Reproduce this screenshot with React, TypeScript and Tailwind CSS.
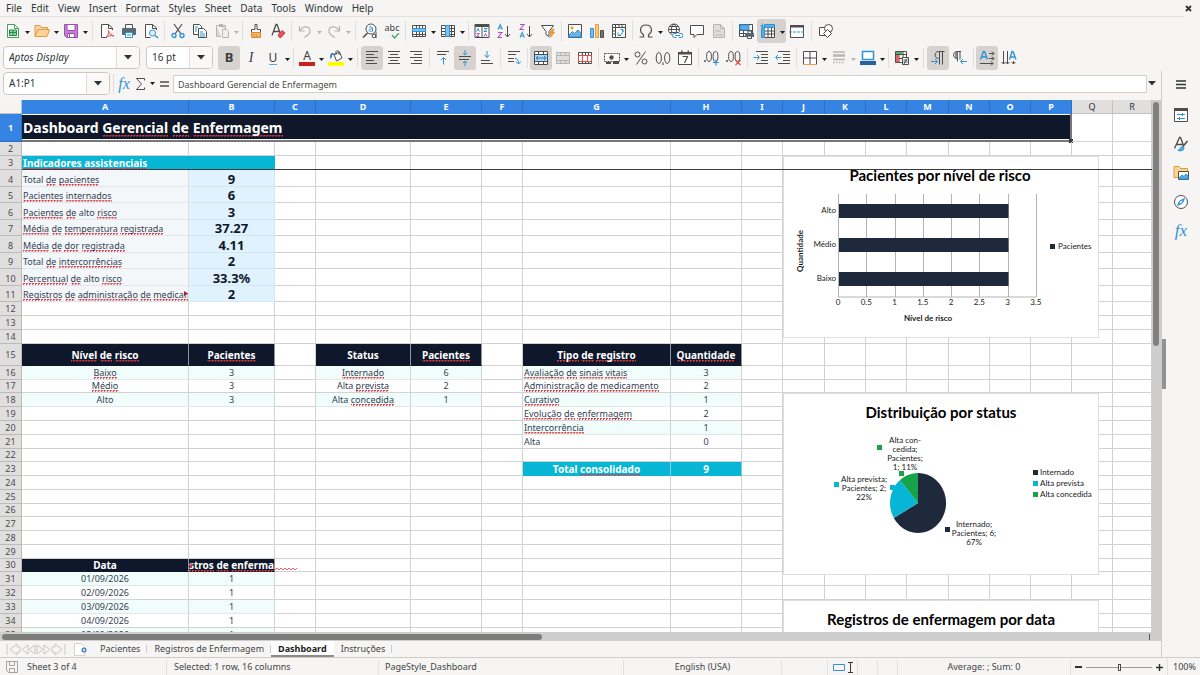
import { Fragment, useState } from 'react';
import type { ReactNode } from 'react';

const K = '#4d4d4d';
const B = '#2f93d6';
const G = '#b5b5b3';

const grid = 'M1.5 2.5h13v11h-13zM1.5 5.5h13M1.5 8.5h13M1.5 11.5h13M5.5 2.5v11M8.5 2.5v11M11.5 2.5v11';

const icons: Record<string, ReactNode> = {
  new: (
    <>
      <path d="M2.5 1.5h7l4 4v9h-11z" fill="#fff" stroke="#43a15c" />
      <path d="M9.5 1.5v4h4" stroke="#43a15c" />
      <path d="M4.5 7h7v5.5h-7zM4.5 9.5h7M8 7v5.5" stroke="#2b8a48" fill="#8fd3a2" />
    </>
  ),
  open: (
    <>
      <path d="M1 13.5V2.5h5l1.500 2h6v2.500" fill="#f6d3a0" stroke="#dd9a45" />
      <path d="M1 13.500 4 6.500h11.500l-2.500 7z" fill="#fbd49a" stroke="#e29a3d" />
    </>
  ),
  save: (
    <>
      <path d="M1.500 1.500h13v13h-11l-2-2z" fill="#c77fd4" stroke="#9b4fae" />
      <path d="M4 1.500h8v6H4z" fill="#fff" stroke="#9b4fae" />
      <path d="M4.500 10.500h7v4h-7z" fill="#fff" stroke="#9b4fae" />
      <path d="M6.500 11v3" stroke="#9b4fae" />
    </>
  ),
  pdf: (
    <>
      <path d="M13.500 7V5l-4-3.500h-7v13h5" fill="#fff" stroke={K} />
      <path d="M9.500 1.500v4h4" stroke={K} />
      <path d="M7 14.500c3-3 3.500-7 2.500-7s0 3.500 5.500 5.500c-3-1-6 0-8 1.500z" stroke="#de4b4b" />
    </>
  ),
  print: (
    <>
      <path d="M4.500 6V1.500h7V6" fill="#fff" stroke={K} />
      <rect x="1" y="5" width="14" height="7" rx="1" fill="#5a6a74" />
      <path d="M4.500 9.500h7v5h-7z" fill="#fff" stroke={B} />
      <path d="M6 12h4" stroke={B} />
    </>
  ),
  preview: (
    <>
      <path d="M13.500 7V5l-4-3.500h-7v13h5" fill="#fff" stroke={K} />
      <path d="M9.500 1.500v4h4" stroke={K} />
      <circle cx="9.500" cy="10" r="3" fill="#e2f1fb" stroke={B} />
      <path d="m12 12.500 3 2.500" stroke={B} strokeWidth="1.500" />
    </>
  ),
  cut: (
    <>
      <path d="m4 1 7 10M12 1 5 11" stroke={K} strokeWidth="1.200" />
      <circle cx="4" cy="12.500" r="2" stroke={B} strokeWidth="1.300" />
      <circle cx="12" cy="12.500" r="2" stroke={B} strokeWidth="1.300" />
    </>
  ),
  copy: (
    <>
      <path d="M1.500 1.500h6l2 2v8h-8z" fill="#fff" stroke={K} />
      <path d="M6.500 5.500h5l3 3v6h-8z" fill="#fff" stroke={K} />
      <path d="M8 9h3M8 11h5M8 13h5M3 4h3M3 6h2M3 8h2" stroke={B} />
    </>
  ),
  paste: (
    <>
      <path d="M2.500 2.500h9V6M2.500 2.500v11H7" fill="#d8d8d6" stroke={G} />
      <path d="M5 1h4v3H5z" fill={G} />
      <path d="M8.500 6.500h4l2 2v6h-6z" fill="#f0f0ef" stroke={G} />
    </>
  ),
  brush: (
    <>
      <path d="M7 1.500h2v5h3.500v3h-9v-3H7z" fill="#fff" stroke={K} />
      <path d="M3.500 9.500h9v5h-9z" fill="#f6b26b" stroke="#e08a2c" />
      <path d="M6 11v3M8.500 12v2.500" stroke="#e08a2c" />
    </>
  ),
  clear: (
    <>
      <path d="m2 12.500 4-11h1l4 11M3.500 8.500h6" stroke={K} strokeWidth="1.300" />
      <path d="m8 12 4-4.500 3 2.500-4 4.500H9.500z" fill="#e8505b" stroke="#d23b47" />
    </>
  ),
  undo: <path d="M2.500 3v5h5M3 7.500C6 2.500 13 2.500 13 8c0 3-3 5-6 6.500" stroke={G} strokeWidth="1.200" />,
  redo: <path d="M13.500 3v5h-5M13 7.500C10 2.500 3 2.500 3 8c0 3 3 5 6 6.500" stroke={G} strokeWidth="1.200" />,
  find: (
    <>
      <circle cx="9" cy="6" r="5" fill="#fff" stroke={K} />
      <path d="m5.500 10-4.500 4.500" stroke={K} strokeWidth="1.600" />
      <path d="M7 4.500c1-1 3-1 3.500.500v3.500M10.500 6C8.500 5.500 7 6.500 7 7.500c.500 1.300 2.500 1.300 3.500 0" stroke={B} />
      <circle cx="12" cy="13" r="1.800" fill="#fff" stroke={K} />
      <path d="M14 8.500V15" stroke={K} />
    </>
  ),
  row: (
    <>
      <path d={grid} fill="#fff" stroke={K} />
      <path d="M1.500 5.500h13v3h-13z" fill="#7fc0ee" stroke={B} />
    </>
  ),
  column: (
    <>
      <path d={grid} fill="#fff" stroke={K} />
      <path d="M5.500 2.500h4v11h-4z" fill="#7fc0ee" stroke={B} />
    </>
  ),
  sort: (
    <>
      <path d="M1 1.500h14v13H1z" fill="#fff" stroke={K} />
      <path d="M1 2h14v2H1z" fill={K} />
      <path d="M8 4v10.500" stroke={K} />
      <path d="m2.500 8.500 1.500-3 1.500 3M10 5.500h3l-3 3h3" stroke={B} />
      <path d="M2.500 10.500h3l-3 3h3M10 13.500l1.500-3 1.500 3" stroke="#b04fc4" />
    </>
  ),
  asc: (
    <>
      <path d="m2 6.500 2.200-5 2.200 5M3 5h2.500" stroke={B} strokeWidth="1.100" />
      <path d="M2 9.500h4l-4 5h4" stroke="#b04fc4" strokeWidth="1.100" />
      <path d="M11.500 3v11M9 11l2.500 3 2.500-3" stroke={K} />
    </>
  ),
  desc: (
    <>
      <path d="M2 1.500h4l-4 5h4" stroke="#b04fc4" strokeWidth="1.100" />
      <path d="m2 14.500 2.200-5 2.200 5M3 13h2.500" stroke={B} strokeWidth="1.100" />
      <path d="M11.500 3v11M9 11l2.500 3 2.500-3" stroke={K} />
    </>
  ),
  filter: (
    <>
      <path d="M1.500 2.500h12l-4.500 6v5l-3-2V8.500z" fill="#fff" stroke={K} />
      <path d="m12.500 6-3 4.500h2L10 14.500l4.500-5h-2l1.500-3z" fill="#f6a440" stroke="#e8912c" />
    </>
  ),
  image: (
    <>
      <path d="M1.500 1.500h13v13h-13z" fill="#fff" stroke={K} />
      <circle cx="5" cy="5" r="1.700" fill="#f5a840" />
      <path d="m2 12 3.500-3.500 2 2L11 7l3 3.500V14H2z" fill="#6db3e3" stroke={B} />
    </>
  ),
  chart: (
    <>
      <path d="M1.500 5.500h3v9h-3z" fill="#7dbdec" stroke={B} />
      <path d="M6.500 1.500h3v13h-3z" fill="#f9c888" stroke="#e59b3c" />
      <path d="M11.500 7.500h3v7h-3z" fill="#777" stroke={K} />
    </>
  ),
  pivot: (
    <>
      <path d="M1.500 1.500h13v13h-13z" fill="#fff" stroke={K} />
      <path d="M1.500 4.500h13M4.500 1.500v13M8 2v2M11 2v2M2 8h2M2 11h2" stroke={K} />
      <path d="M7 9.500v3h3M12 9V6.500H9.500M7 12.500c3 0 5-2 5-5.500" stroke={B} />
    </>
  ),
  omega: <path d="M1.500 14h4v-2.200C.700 8.500 2 2 8 2s7.300 6.500 2.500 9.800V14h4" stroke={K} strokeWidth="1.200" />,
  hyperlink: (
    <>
      <circle cx="7" cy="6.500" r="5.500" fill="#fff" stroke={K} />
      <path d="M1.500 6.500h11M7 1c-3.500 3-3.500 8 0 11M7 1c3.500 3 3.500 8 0 11M2.500 3.500h9M2.500 9.500h9" stroke={K} />
      <path d="M5 10h11v5H5z" fill="#f5f4f2" />
      <path d="M9.500 10.500h-2a2 2 0 0 0 0 4h2M12 10.500h2a2 2 0 0 1 0 4h-2M8.500 12.500h4.500" stroke={B} />
    </>
  ),
  comment: <path d="M1.500 2.500h13v9H8l-3 3v-3H1.500z" fill="#fff" stroke={K} />,
  page: (
    <>
      <path d="M2.500 1.500h7l4 4v9h-11z" fill="#dededc" stroke={G} />
      <path d="M9.500 1.500v4h4M4.500 12h7M4.500 8h5" stroke={G} />
    </>
  ),
  printArea: (
    <>
      <path d="M1.500 1.500h13v12h-13zM1.500 7.500h13M1.500 10.500h13M5.500 1.500v12M10 1.500v12" fill="#fff" stroke={K} />
      <path d="M2 2h9v5H2z" fill="#5aaae4" stroke={B} />
      <path d="M7 10h9v4H7z" fill="#5a6a74" />
      <path d="M9.500 8h4v2M9.500 13h4v2.500h-4z" fill="#fff" stroke={K} />
    </>
  ),
  freeze: (
    <>
      <path d="M4.500 4.500h10v10h-10zM4.500 8h10M4.500 11h10M8 4.500v10M11.500 4.500v10" fill="#fff" stroke={K} />
      <path d="M4.500 1.500h10v3h-10zM1.500 5h3v9.500h-3z" fill="#5aaae4" stroke={B} />
      <path d="M0 3h5M2.500.500v5" stroke={B} />
    </>
  ),
  split: (
    <>
      <path d="M1.500 2.500h13v12h-13z" fill="#fff" stroke={K} />
      <path d="M1 2h14v2.500H1z" fill={K} />
      <path d="M0 9h16" stroke={B} strokeDasharray="3 1" />
    </>
  ),
  shapes: (
    <>
      <path d="M1.500 4.500h7v8h-7z" fill="#fff" stroke={K} />
      <circle cx="10.500" cy="5.500" r="4" fill="#fff" stroke={K} />
      <path d="m9.500 6.500 4 4-4 4-4-4z" fill="#fff" stroke={K} />
    </>
  ),
  left: <path d="M2 1.500h12M2 4.500h8M2 7.500h12M2 10.500h8M2 13.500h11" stroke={K} />,
  center: <path d="M2 1.500h12M4 4.500h8M2 7.500h12M4 10.500h8M2 13.500h12" stroke={K} />,
  right: <path d="M2 1.500h12M6 4.500h8M2 7.500h12M6 10.500h8M3 13.500h11" stroke={K} />,
  top: (
    <>
      <path d="M2 1.500h12M2 4.500h9" stroke={K} />
      <path d="M8.500 14.500v-7M6 10l2.500-2.500L11 10" stroke={B} />
    </>
  ),
  middle: (
    <>
      <path d="M2 6.500h12M2 9.500h10" stroke={K} />
      <path d="M8 0v4.500M6 3l2 2 2-2M8 16v-4.500M6 13l2-2 2 2" stroke={B} />
    </>
  ),
  bottom: (
    <>
      <path d="M2 10.500h9M2 13.500h12" stroke={K} />
      <path d="M8 1v6.500M5.500 5 8 7.500 10.500 5" stroke={B} />
    </>
  ),
  wrap: (
    <>
      <path d="M2 1.500h12M2 4.500h8M2 8.500h6M2 11.500h6" stroke={K} />
      <path d="M9 8.500c3 0 3.500 2 3.500 5M10 11.500l2.500 2.500 2.500-2.500" stroke={B} />
    </>
  ),
  merge: (
    <>
      <path d="M1.500 1.500h13v13h-13zM1.500 4.500h13M1.500 11.500h13M5.500 1.500v3M10.500 1.500v3M5.500 11.500v3M10.500 11.500v3" fill="#fff" stroke={K} />
      <path d="M2 5h12v6H2z" fill="#a9d6f5" />
      <path d="M3 8h10M5 6 3 8l2 2M11 6l2 2-2 2" stroke="#2180c4" />
    </>
  ),
  mergeOff: (
    <path d="M1.500 2.500h13v11h-13zM1.500 5.500h13M1.500 10.500h13M5.500 2.500v3M10.500 2.500v3M5.500 10.500v3M10.500 10.500v3" fill="#dededc" stroke={G} />
  ),
  unmerge: (
    <>
      <path d={grid} fill="#fff" stroke={K} />
      <path d="M1.500 5.500h13v6h-13zM5.500 5.500v6M10.500 5.500v6" fill="#fff" stroke="#de4b4b" />
    </>
  ),
  currency: (
    <>
      <path d="M.500 3.500h15v8H.500z" fill="#fff" stroke={K} strokeDasharray="2 1" />
      <circle cx="7.500" cy="7.500" r="2.200" fill={K} />
      <path d="M9 11h6v3H9zM2 12h5v2H2z" fill={K} />
    </>
  ),
  percent: (
    <>
      <circle cx="4.500" cy="4.500" r="2.500" stroke={K} />
      <circle cx="11.500" cy="11.500" r="2.500" stroke={K} />
      <path d="m12.500 1.500-9 13" stroke={K} />
    </>
  ),
  number: (
    <>
      <ellipse cx="3.800" cy="8" rx="2.600" ry="5.500" stroke={K} />
      <ellipse cx="12.200" cy="8" rx="2.600" ry="5.500" stroke={K} />
      <path d="M8 12.500V15" stroke={K} strokeWidth="1.200" />
    </>
  ),
  date: (
    <>
      <path d="M1.500 2.500h13v12h-13z" fill="#fff" stroke={K} />
      <path d="M1 2h14v2.500H1zM4 .500h1.500V3H4zM10.500.500H12V3h-1.500z" fill={K} />
      <path d="M5.500 6.500h5l-3 6.500" stroke={K} strokeWidth="1.200" />
    </>
  ),
  decAdd: (
    <>
      <ellipse cx="5" cy="6.500" rx="2.400" ry="5" stroke={K} />
      <ellipse cx="11.500" cy="6.500" rx="2.400" ry="5" stroke={K} />
      <path d="M1 10v2" stroke={K} strokeWidth="1.500" />
      <path d="M9 12.500h6M12 9.500v6" stroke={B} strokeWidth="1.200" />
    </>
  ),
  decDel: (
    <>
      <ellipse cx="5" cy="6.500" rx="2.400" ry="5" stroke={K} />
      <ellipse cx="11.500" cy="6.500" rx="2.400" ry="5" stroke={K} />
      <path d="M1 10v2" stroke={K} strokeWidth="1.500" />
      <path d="m9.500 10 5 5M14.500 10l-5 5" stroke="#de4b4b" strokeWidth="1.200" />
    </>
  ),
  indent: (
    <>
      <path d="M3 1.500h12M8 4.500h7M8 7.500h7M8 10.500h7M3 13.500h12" stroke={K} />
      <path d="M.500 7.500H6M4 5l2.500 2.500L4 10" stroke={B} />
    </>
  ),
  outdent: (
    <>
      <path d="M3 1.500h12M8 4.500h7M8 7.500h7M8 10.500h7M3 13.500h12" stroke={K} />
      <path d="M1 7.500h5.500M3 5 .500 7.500 3 10" stroke={B} />
    </>
  ),
  border: (
    <>
      <path d="M1.500 14.500v-13h13v13M8 1.500v13M1.500 8h13" fill="#fff" stroke={K} />
      <path d="M1.500 14.500h13" stroke="#ee9b4b" />
    </>
  ),
  lineStyle: <path d="M2 2h12M2 5h12M2 6h12M2 9.500h12M2 12.500h1.500M5 12.500h1.500M8 12.500h1.500M11 12.500h1.500" stroke={G} strokeWidth="1.500" />,
  lineColor: (
    <>
      <path d="M2.500 1.500h11v8h-11z" fill="#fff" stroke={B} strokeWidth="1.500" />
      <path d="M0 11h16v4H0z" fill="#2a6099" />
    </>
  ),
  conditional: (
    <>
      <path d="M1.500 1.500h11v11h-11zM1.500 4.500h11M1.500 8.500h11M5 1.500v11M9 1.500v11" fill="#fff" stroke={K} />
      <path d="M2 2h6.500v2H2z" fill="#4fb070" />
      <path d="M2 5h3v7H2z" fill="#e8606a" />
      <path d="M8.500 7.500h6v7h-6z" fill="#fff" stroke={K} />
      <path d="M9.500 10h4M9.500 12h4M13 8.500 10 14" stroke={K} />
    </>
  ),
  ltr: (
    <>
      <path d="M8.500 8.500c-4.500 0-4.500-7 0-7h6M9.500 1.500v13M12.500 1.500v13" stroke={K} />
      <path d="M1 11.500h6M5 9l2.500 2.500L5 14" stroke={B} />
    </>
  ),
  rtl: (
    <>
      <path d="M5 8.500C.500 8.500.500 1.500 5 1.500h4M5.500 1.500v10M8 1.500v8" stroke={K} />
      <path d="M3 2h2.500v6H3z" fill="#8a8a8a" />
      <path d="M15 11.500H9M11 9l-2.500 2.500L11 14" stroke={B} />
    </>
  ),
  textRight: (
    <>
      <path d="m1.500 9.500 3-8h1l3 8M2.500 7h5" stroke={B} strokeWidth="1.400" />
      <path d="M10 3.500h5M13 1.500l2 2-2 2M10 8.500h5M13 6.500l2 2-2 2M1 13.500h13M12 11.500l2 2-2 2" stroke={K} />
    </>
  ),
  textDown: (
    <>
      <path d="m8.500 9.500 2.500-8h1l3 8M9.500 7h4" stroke={B} strokeWidth="1.400" />
      <path d="M2.500 1v13M.500 12l2 2 2-2M6.500 1v13M4.500 12l2 2 2-2M12.500 11v3M10.500 12l2 2 2-2" stroke={K} />
    </>
  ),
  properties: (
    <>
      <path d="M1.500 1.500h13v13h-13z" fill="#fff" stroke={K} />
      <path d="M1 1h14v3H1z" fill={K} />
      <path d="M4 7.500h8M4 11.500h8M9.500 6v3M6.500 10v3" stroke={B} />
    </>
  ),
  styles: (
    <>
      <path d="m1.500 12.500 5-11h1l3 8M3.500 8.500h6" stroke={K} strokeWidth="1.300" />
      <path d="m14.500 5-5 6" stroke={K} strokeWidth="1.500" />
      <path d="M9.500 10.500c2 0 2 3.500-.5 4s-4 .5-4-.5c2 0 2.500-3.500 4.500-3.500z" fill="#5aaae4" stroke={B} />
    </>
  ),
  gallery: (
    <>
      <path d="M1 12.500v-11h5l1.500 2h7v9z" fill="#fbd49a" stroke="#e29a3d" />
      <path d="M5.500 6.500h10v8h-10z" fill="#fff" stroke={K} />
      <path d="m6 13 3-3 2 1.500 2-2.500 2 2v3H6z" fill="#5aaae4" stroke={B} />
    </>
  ),
  navigator: (
    <>
      <circle cx="8" cy="8" r="6.500" fill="#fff" stroke={K} />
      <path d="M11.500 4.500 9.500 9l-5 2.500 2-4.500z" fill="#5aaae4" stroke={B} />
      <circle cx="8" cy="8" r="1" fill="#fff" />
    </>
  ),
};

function Icon({ name }: { name: string }) {
  return (
    <svg width="16" height="16" viewBox="0 0 16 16" fill="none" className="shrink-0">
      {icons[name]}
    </svg>
  );
}

function Caret({ dim }: { dim?: boolean }) {
  return (
    <svg width="5" height="3" viewBox="0 0 5 3" className="shrink-0">
      <path d="M0 0h5L2.500 3z" fill={dim ? '#b5b5b3' : '#1d1d1d'} />
    </svg>
  );
}

function BigCaret() {
  return (
    <svg width="8" height="5" viewBox="0 0 8 5" className="shrink-0">
      <path d="M0 0h8L4 4.500z" fill="#2e3436" />
    </svg>
  );
}

type ToolProps = { label: string; icon?: string; menu?: boolean; on?: boolean; dim?: boolean; children?: ReactNode };

function Tool({ label, icon, menu, on, dim, children }: ToolProps) {
  return (
    <div className={`flex shrink-0 items-center rounded-[3px] ${on ? 'bg-[#d5d2cf]' : ''}`}>
      <button aria-label={label} className="flex h-6 w-[22px] items-center justify-center">
        {icon ? <Icon name={icon} /> : children}
      </button>
      {menu && (
        <button aria-label={`${label} options`} className="flex h-6 w-[7px] items-center justify-center pt-1">
          <Caret dim={dim} />
        </button>
      )}
    </div>
  );
}

const Sep = ({ wide }: { wide?: boolean }) => (
  <div className={`flex h-5 shrink-0 justify-center ${wide ? 'w-[7px]' : 'w-[5px]'}`}>
    <div className="w-px bg-[#e1dfdd]" />
  </div>
);

const menus = ['File', 'Edit', 'View', 'Insert', 'Format', 'Styles', 'Sheet', 'Data', 'Tools', 'Window', 'Help'];

function MenuBar() {
  return (
    <div className="flex h-4 items-center pl-[6px] pr-[7px] text-[10px] text-[#2e3436]">
      <nav className="flex gap-[9px]">
        {menus.map((m) => (
          <button key={m} className="leading-4">{m}</button>
        ))}
      </nav>
      <button aria-label="Close document" className="ml-auto p-px">
        <svg width="7" height="7" viewBox="0 0 7 7">
          <path d="m1 1 5 5M6 1 1 6" stroke="#2e3436" strokeWidth="1.800" />
        </svg>
      </button>
    </div>
  );
}

function StandardBar() {
  return (
    <div className="mr-4 flex h-7 items-center border-t border-[#e4e2e0] pl-[2px]">
      <Tool label="New" icon="new" menu />
      <Tool label="Open" icon="open" menu />
      <Tool label="Save" icon="save" menu />
      <Sep wide />
      <Tool label="Export as PDF" icon="pdf" />
      <Tool label="Print" icon="print" />
      <Tool label="Print preview" icon="preview" />
      <Sep />
      <Tool label="Cut" icon="cut" />
      <Tool label="Copy" icon="copy" />
      <Tool label="Paste" icon="paste" menu dim />
      <Sep />
      <Tool label="Clone formatting" icon="brush" />
      <Tool label="Clear formatting" icon="clear" />
      <Sep />
      <Tool label="Undo" icon="undo" menu dim />
      <Tool label="Redo" icon="redo" menu dim />
      <Sep wide />
      <Tool label="Find and replace" icon="find" />
      <Tool label="Spelling">
        <span className="relative flex h-4 text-[9px] leading-[10px] text-[#3c3c3c]">
          abc
          <svg width="9" height="6" viewBox="0 0 9 6" className="absolute -right-px bottom-0" fill="none">
            <path d="m1 2 2.500 3L8 0" stroke="#3aa76d" strokeWidth="1.300" />
          </svg>
        </span>
      </Tool>
      <Sep />
      <Tool label="Row" icon="row" menu />
      <Tool label="Column" icon="column" menu />
      <Sep />
      <Tool label="Sort" icon="sort" />
      <Tool label="Sort ascending" icon="asc" />
      <Tool label="Sort descending" icon="desc" />
      <Tool label="AutoFilter" icon="filter" />
      <Sep />
      <Tool label="Insert image" icon="image" />
      <Tool label="Insert chart" icon="chart" />
      <Tool label="Pivot table" icon="pivot" />
      <Sep />
      <Tool label="Special character" icon="omega" menu />
      <Tool label="Hyperlink" icon="hyperlink" />
      <Tool label="Comment" icon="comment" />
      <Tool label="Headers and footers" icon="page" />
      <Sep />
      <Tool label="Print area" icon="printArea" />
      <Tool label="Freeze panes" icon="freeze" menu on />
      <Tool label="Split window" icon="split" />
      <Sep wide />
      <Tool label="Draw functions" icon="shapes" />
    </div>
  );
}

function Combo({ label, value, inputClass, arrowClass }: { label: string; value: string; inputClass: string; arrowClass: string }) {
  return (
    <div className="flex h-[23px] shrink-0 rounded-[4px] border border-[#cdc7c2] bg-white text-[10px] text-[#2e3436]">
      <input aria-label={label} defaultValue={value} className={`bg-transparent pl-[5px] outline-none ${inputClass}`} />
      <button aria-label={`${label} list`} className={`flex items-center justify-center rounded-r-[3px] border-l border-[#dedbd8] bg-[#faf9f8] ${arrowClass}`}>
        <BigCaret />
      </button>
    </div>
  );
}

function FormatBar() {
  return (
    <div className="flex h-[27px] items-center pl-[3px]">
      <Combo label="Font name" value="Aptos Display" inputClass="w-[112px] italic" arrowClass="w-[23px]" />
      <div className="w-[6px] shrink-0" />
      <Combo label="Font size" value="16 pt" inputClass="w-[42px]" arrowClass="w-[23px]" />
      <div className="w-[5px] shrink-0" />
      <Tool label="Bold" on>
        <span className="text-[13px] font-bold text-[#3c3c3c]">B</span>
      </Tool>
      <Tool label="Italic">
        <span className="font-['Liberation_Serif',serif] text-sm italic text-[#3c3c3c]">I</span>
      </Tool>
      <Tool label="Underline" menu>
        <span className="border-b border-[#5aaae4] text-[12px] leading-[13px] text-[#3c3c3c]">U</span>
      </Tool>
      <Sep />
      <Tool label="Font colour" menu>
        <span className="flex w-4 justify-center border-b-4 border-[#c9211e] text-[12px] leading-3 text-[#3c3c3c]">A</span>
      </Tool>
      <Tool label="Highlighting" menu>
        <svg width="16" height="16" viewBox="0 0 16 16" fill="none">
          <path d="M6 4.500 11.500 2l2.500 6-5.500 3z" fill="#fff" stroke="#4d4d4d" />
          <path d="M8 5V1.500c0-1 3-1 3 0V5" stroke="#4d4d4d" />
          <path d="M6.500 3.500C3 2 2 3.500 2 8.500c2 0 2-2 2-3.500h2z" fill="#2a7fc9" />
          <path d="M0 12h16v4H0z" fill="#ffff00" />
        </svg>
      </Tool>
      <Sep wide />
      <Tool label="Align left" icon="left" on />
      <Tool label="Center horizontally" icon="center" />
      <Tool label="Align right" icon="right" />
      <Sep />
      <Tool label="Align top" icon="top" />
      <Tool label="Center vertically" icon="middle" on />
      <Tool label="Align bottom" icon="bottom" />
      <Sep />
      <Tool label="Wrap text" icon="wrap" />
      <Sep />
      <Tool label="Merge and center" icon="merge" on />
      <Tool label="Merge cells" icon="mergeOff" />
      <Tool label="Unmerge cells" icon="unmerge" />
      <Sep />
      <Tool label="Currency" icon="currency" menu />
      <Tool label="Percent" icon="percent" />
      <Tool label="Number" icon="number" />
      <Tool label="Date" icon="date" />
      <Sep />
      <Tool label="Add decimal place" icon="decAdd" />
      <Tool label="Delete decimal place" icon="decDel" />
      <Sep />
      <Tool label="Increase indent" icon="indent" />
      <Tool label="Decrease indent" icon="outdent" />
      <Sep />
      <Tool label="Borders" icon="border" menu />
      <Tool label="Border style" icon="lineStyle" menu dim />
      <Tool label="Border colour" icon="lineColor" menu />
      <Sep />
      <Tool label="Conditional formatting" icon="conditional" menu />
      <Sep wide />
      <Tool label="Left to right" icon="ltr" on />
      <Tool label="Right to left" icon="rtl" />
      <Sep />
      <Tool label="Text direction right" icon="textRight" on />
      <Tool label="Text direction down" icon="textDown" />
    </div>
  );
}

function FormulaBar() {
  return (
    <div className="flex h-[29px] items-start pl-[3px] pt-px">
      <Combo label="Name box" value="A1:P1" inputClass="w-[82px]" arrowClass="w-[23px]" />
      <div className="flex h-[23px] items-center pl-px text-[#4d4d4d]">
        <Sep />
        <button aria-label="Function wizard" className="w-4 font-['Liberation_Serif',serif] text-[16px] italic leading-5 text-[#2f93d6]">fx</button>
        <button aria-label="Select function" className="flex w-4 justify-center">
          <svg width="9" height="12" viewBox="0 0 9 12" fill="none">
            <path d="M8.500 2.500V.500h-8l5 5.500-5 5.500h8v-2" stroke="#4d4d4d" />
          </svg>
        </button>
        <button aria-label="Function list" className="flex w-2 items-center justify-center"><Caret /></button>
        <button aria-label="Formula" className="flex w-[17px] justify-center">
          <svg width="9" height="6" viewBox="0 0 9 6"><path d="M0 1h9M0 5h9" stroke="#4d4d4d" strokeWidth="1.500" /></svg>
        </button>
      </div>
      <input
        aria-label="Input line"
        defaultValue="Dashboard Gerencial de Enfermagem"
        className="mt-[3px] h-[18px] min-w-0 flex-1 border border-[#d5d0cc] bg-white pl-1 text-[9px] text-[#4a4a4a] outline-none"
      />
      <button aria-label="Expand formula bar" className="flex h-[23px] w-[14px] items-center pl-px"><BigCaret /></button>
    </div>
  );
}

const columns = 'ABCDEFGHIJKLMNOPQR'.split('');

const colWidths = [
  'w-[167px]', 'w-[86px]', 'w-[41px]', 'w-[95px]', 'w-[71px]', 'w-[41px]', 'w-[148px]', 'w-[71px]', 'w-[41px]',
  'w-[42px]', 'w-[41px]', 'w-[41px]', 'w-[42px]', 'w-[41px]', 'w-[41px]', 'w-[41px]', 'w-[41px]', '',
];

const rowHeights = [
  'h-[28px]', 'h-[14px]', 'h-[14px]', 'h-[17px]', 'h-[16px]', 'h-[17px]', 'h-[16px]', 'h-[17px]', 'h-[16px]',
  'h-[17px]', 'h-[16px]', 'h-[14px]', 'h-[14px]', 'h-[14px]', 'h-[22px]', 'h-[14px]', 'h-[13px]', 'h-[14px]',
  'h-[14px]', 'h-[14px]', 'h-[14px]', 'h-[13px]', 'h-[14px]', 'h-[14px]', 'h-[14px]', 'h-[13px]', 'h-[14px]',
  'h-[14px]', 'h-[14px]', 'h-[13px]', 'h-[14px]', 'h-[14px]', 'h-[14px]', 'h-[14px]', 'h-[14px]',
];

const kinds = {
  label: 'bg-[#f4f7fa] align-bottom text-[9px] text-[#334155] border-b-[#e2e6ea] border-r-[#d9dee3]',
  kpi: 'bg-[#e0f2fe] align-bottom text-center text-[13px] font-bold text-[#0f172a] border-[#d3e8f6]',
  head: 'bg-[#0f172a] text-center text-[10px] font-bold text-white border-b-[#0f172a] border-r-[#8f949e]',
  stripe: 'bg-[#f0fdfa] align-bottom text-center text-[9px] text-[#334155] border-b-[#dfe9e7] border-r-[#cfd6d5]',
  plain: 'bg-white align-bottom text-center text-[9px] text-[#334155] border-[#d2d2d2]',
  stripeLeft: 'bg-[#f0fdfa] align-bottom text-[9px] text-[#334155] border-b-[#dfe9e7] border-r-[#cfd6d5]',
  plainLeft: 'bg-white align-bottom text-[9px] text-[#334155] border-[#d2d2d2]',
  total: 'bg-[#06b6d4] align-bottom text-center text-[10px] font-bold text-white border-b-[#06b6d4] border-r-[#7fd0df]',
};

type Kind = keyof typeof kinds;

// words prefixed with ~ carry the spell checker's underline
const cells: Record<string, [string, Kind]> = {
  A4: ['Total ~de ~pacientes', 'label'], B4: ['9', 'kpi'],
  A5: ['~Pacientes ~internados', 'label'], B5: ['6', 'kpi'],
  A6: ['~Pacientes ~de alto ~risco', 'label'], B6: ['3', 'kpi'],
  A7: ['~Média ~de ~temperatura ~registrada', 'label'], B7: ['37.27', 'kpi'],
  A8: ['~Média ~de ~dor ~registrada', 'label'], B8: ['4.11', 'kpi'],
  A9: ['Total ~de ~intercorrências', 'label'], B9: ['2', 'kpi'],
  A10: ['~Percentual ~de alto ~risco', 'label'], B10: ['33.3%', 'kpi'],
  A11: ['~Registros ~de ~administração ~de ~medicamento', 'label'], B11: ['2', 'kpi'],
  A15: ['~Nível ~de ~risco', 'head'], B15: ['~Pacientes', 'head'],
  D15: ['Status', 'head'], E15: ['~Pacientes', 'head'],
  G15: ['~Tipo ~de ~registro', 'head'], H15: ['~Quantidade', 'head'],
  A16: ['~Baixo', 'stripe'], B16: ['3', 'stripe'],
  A17: ['~Médio', 'plain'], B17: ['3', 'plain'],
  A18: ['Alto', 'stripe'], B18: ['3', 'stripe'],
  D16: ['~Internado', 'stripe'], E16: ['6', 'stripe'],
  D17: ['Alta ~prevista', 'plain'], E17: ['2', 'plain'],
  D18: ['Alta ~concedida', 'stripe'], E18: ['1', 'stripe'],
  G16: ['~Avaliação ~de ~sinais ~vitais', 'stripeLeft'], H16: ['3', 'stripe'],
  G17: ['~Administração ~de ~medicamento', 'plainLeft'], H17: ['2', 'plain'],
  G18: ['~Curativo', 'stripeLeft'], H18: ['1', 'stripe'],
  G19: ['~Evolução ~de ~enfermagem', 'plainLeft'], H19: ['2', 'plain'],
  G20: ['~Intercorrência', 'stripeLeft'], H20: ['1', 'stripe'],
  G21: ['Alta', 'plainLeft'], H21: ['0', 'plain'],
  G23: ['Total ~consolidado', 'total'], H23: ['9', 'total'],
  A30: ['Data', 'head'], B30: ['~Registros ~de ~enfermagem', 'head'],
  A31: ['01/09/2026', 'stripe'], B31: ['1', 'stripe'],
  A32: ['02/09/2026', 'plain'], B32: ['1', 'plain'],
  A33: ['03/09/2026', 'stripe'], B33: ['1', 'stripe'],
  A34: ['04/09/2026', 'plain'], B34: ['1', 'plain'],
  A35: ['05/09/2026', 'stripe'], B35: ['1', 'stripe'],
};

const clipped = ['A11', 'B30'];

function Spelled({ text }: { text: string }) {
  return (
    <>
      {text.split(' ').map((word, i) => (
        <Fragment key={i}>
          {i > 0 && ' '}
          {word.startsWith('~') ? (
            <span className="bg-[linear-gradient(135deg,#dc3a40_50%,transparent_50%)] bg-[length:3px_2px] bg-bottom bg-repeat-x">
              {word.slice(1)}
            </span>
          ) : (
            word
          )}
        </Fragment>
      ))}
    </>
  );
}

function Cell({ id }: { id: string }) {
  const cell = cells[id];
  if (!cell) {
    return (
      <td className="relative border-b border-r border-[#d2d2d2] p-0">
        {id === 'C30' && (
          <svg width="22" height="4" viewBox="0 0 22 4" fill="none" className="absolute bottom-0 left-0">
            <path d="m0 3 2-2 2 2 2-2 2 2 2-2 2 2 2-2 2 2 2-2 2 2 2-2" stroke="#e0383e" strokeWidth="0.800" />
          </svg>
        )}
      </td>
    );
  }
  const [text, kind] = cell;
  return (
    <td className={`relative border-b border-r p-0 ${kinds[kind]}`}>
      <div
        className={`flex whitespace-nowrap ${clipped.includes(id) ? 'overflow-x-clip' : ''} ${kind === 'kpi' ? 'leading-[14px]' : 'leading-3'} ${kinds[kind].includes('text-center') ? 'justify-center' : 'pl-px'}`}
      >
        <span><Spelled text={text} /></span>
      </div>
      {id === 'A11' && (
        <svg width="4" height="5" viewBox="0 0 4 5" className="absolute right-0 top-[5px]">
          <path d="M0 0v5l4-2.500z" fill="#a32027" />
        </svg>
      )}
      {id === 'B30' && (
        <svg width="3" height="5" viewBox="0 0 3 5" className="absolute left-0 top-1">
          <path d="M3 0v5L0 2.500z" fill="#e0383e" />
        </svg>
      )}
    </td>
  );
}

function SheetTable() {
  return (
    <table className="w-full table-fixed border-separate border-spacing-0 text-[#2e3436]">
      <colgroup>
        <col className="w-[22px]" />
        {colWidths.map((w, i) => <col key={i} className={w} />)}
      </colgroup>
      <thead>
        <tr className="h-[14px] text-[9px] leading-3">
          <th className="border-b border-r border-[#c4c2c0] bg-[#f5f4f2] p-0" />
          {columns.map((c, i) => (
            <th
              key={c}
              scope="col"
              className={`border-r p-0 ${i < 16 ? 'border-[#2a6fc4] bg-[#3584e4] font-bold text-white' : 'border-b border-[#c4c2c0] bg-[#e1dfdd] font-normal'}`}
            >
              {c}
            </th>
          ))}
        </tr>
      </thead>
      <tbody>
        {rowHeights.map((h, i) => {
          const n = i + 1;
          return (
            <tr key={n} className={h}>
              <th
                scope="row"
                className={`border-b border-r p-0 text-[9px] leading-3 ${n === 1 ? 'border-[#2a6fc4] bg-[#3584e4] font-bold text-white' : 'border-[#bdbbb9] bg-[#e1dfdd] font-normal text-[#4a4a4a]'} ${n === 15 ? 'align-middle' : n > 1 ? 'align-bottom' : ''}`}
              >
                {n}
              </th>
              {n === 1 && (
                <>
                  <td colSpan={16} className="relative border-b-2 border-r-2 border-[#77777a] bg-[#0f172a] p-0 pt-[2px] text-[14px] font-bold leading-5 text-white shadow-[inset_0_1px_0_#fff,inset_0_-1px_0_#fff]">
                    <div className="pl-px"><Spelled text="Dashboard ~Gerencial ~de ~Enfermagem" /></div>
                    <span className="absolute -bottom-[3px] -right-[3px] size-1 bg-[#3a3a3c]" />
                  </td>
                  <Cell id="Q1" />
                  <Cell id="R1" />
                </>
              )}
              {n === 3 && (
                <td colSpan={2} className="border-b border-r border-[#06b6d4] bg-[#06b6d4] p-0 align-bottom text-[10px] font-bold leading-3 text-white">
                  <div className="pl-px"><Spelled text="~Indicadores ~assistenciais" /></div>
                </td>
              )}
              {n > 1 && columns.slice(n === 3 ? 2 : 0).map((c) => <Cell key={c} id={`${c}${n}`} />)}
            </tr>
          );
        })}
      </tbody>
    </table>
  );
}

const chartClass = "absolute left-[783px] bg-white outline outline-1 -outline-offset-1 outline-[#dedede] font-['Lato',sans-serif]";
const levels = [
  { name: 'Alto', value: 3 },
  { name: 'Médio', value: 3 },
  { name: 'Baixo', value: 3 },
];

function RiskChart() {
  return (
    <svg width="316" height="182" viewBox="0 0 316 182" className={`${chartClass} top-[56px]`} fontSize="8" fill="#1a1a1a">
      <text x="157" y="25" fontSize="15" fontWeight="700" textAnchor="middle" fill="#000">Pacientes por nível de risco</text>
      {[0, 0.5, 1, 1.5, 2, 2.5, 3, 3.5].map((v) => (
        <g key={v}>
          <path d={`M${Math.round(v * 56.5) + 55.5} 38v103`} stroke="#b3b3b3" />
          <text x={v * 56.5 + 55} y="149" textAnchor="middle">{v}</text>
        </g>
      ))}
      <path d="M55 141h198" stroke="#b3b3b3" />
      {levels.map((l, i) => (
        <g key={l.name}>
          <rect x="56" y={48 + i * 34} width={l.value * 56.5} height="14" fill="#1e293b" />
          <text x="53" y={57 + i * 34} textAnchor="end">{l.name}</text>
        </g>
      ))}
      <text x="145" y="165" fontWeight="700" textAnchor="middle">Nível de risco</text>
      <text transform="rotate(-90 20 95)" x="20" y="95" fontWeight="700" textAnchor="middle">Quantidade</text>
      <rect x="267" y="88" width="5" height="5" fill="#1e293b" />
      <text x="275" y="93">Pacientes</text>
    </svg>
  );
}

const legend = [
  { name: 'Internado', color: '#1e293b' },
  { name: 'Alta prevista', color: '#06b6d4' },
  { name: 'Alta concedida', color: '#16a34a' },
];

const pieLabels = [
  { x: 122, y: 50, lines: ['Alta con-', 'cedida;', 'Pacientes;', '1; 11%'] },
  { x: 81, y: 89, lines: ['Alta prevista;', 'Pacientes; 2;', '22%'] },
  { x: 191, y: 134, lines: ['Internado;', 'Pacientes; 6;', '67%'] },
];

function StatusChart() {
  return (
    <svg width="316" height="182" viewBox="0 0 316 182" className={`${chartClass} top-[293px]`} fontSize="8" fill="#1a1a1a">
      <text x="158" y="25" fontSize="15" fontWeight="700" textAnchor="middle" fill="#000">Distribuição por status</text>
      <path d="M135 110V80a28 30 0 1 1-24.200 45z" fill="#1e293b" />
      <path d="M135 110l-24.200 15A28 30 0 0 1 117 87z" fill="#06b6d4" />
      <path d="M135 110 117 87a28 30 0 0 1 18-7z" fill="#16a34a" />
      <path d="M94 52h5v5h-5zM116 78h5v5h-5z" fill="#16a34a" />
      <path d="M51 89h5v5h-5zM107 92h5v5h-5z" fill="#06b6d4" />
      <path d="M162 134h5v5h-5z" fill="#1e293b" />
      {pieLabels.map((l) => (
        <text key={l.x} textAnchor="middle">
          {l.lines.map((line, i) => (
            <tspan key={line} x={l.x} y={l.y + i * 9}>{line}</tspan>
          ))}
        </text>
      ))}
      {legend.map((l, i) => (
        <g key={l.name}>
          <rect x="250" y={77 + i * 11} width="5" height="5" fill={l.color} />
          <text x="257" y={82 + i * 11}>{l.name}</text>
        </g>
      ))}
    </svg>
  );
}

function DateChart() {
  return (
    <svg width="316" height="182" viewBox="0 0 316 182" className={`${chartClass} top-[500px]`}>
      <text x="158" y="25" fontSize="15" fontWeight="700" textAnchor="middle">Registros de enfermagem por data</text>
    </svg>
  );
}

const sheets = ['Pacientes', 'Registros de Enfermagem', 'Dashboard', 'Instruções'];

function SheetTabs() {
  const [active, setActive] = useState('Dashboard');
  return (
    <div className="flex h-4 items-stretch pl-[6px] text-[9px] text-[#3f4446]">
      <div className="flex items-center text-[#c9c7c5]">
        {['M1 1v11M11 1 4 6.500 11 12V9h3V4h-3z', 'M7 2 1 6.500 7 11zM14 2 8 6.500l6 4.500z', 'M1 2l6 4.500L1 11zM8 2l6 4.500L8 11z', 'M14 1v11M4 1l7 5.500L4 12V9H1V4h3z'].map((d, i) => (
          <button key={i} aria-label={['First sheet', 'Previous sheet', 'Next sheet', 'Last sheet'][i]}>
            <svg width="15" height="13" viewBox="0 0 15 13" fill="none" stroke="currentColor"><path d={d} /></svg>
          </button>
        ))}
      </div>
      <button aria-label="Add sheet" className="ml-2">
        <svg width="14" height="14" viewBox="0 0 14 14" fill="none">
          <path d="M.500 1.500h7l3 3v9H.500z" fill="#fff" stroke="#d6d4d2" />
          <circle cx="10" cy="8" r="2.500" fill="#2a6fc4" />
          <path d="M10 6.500v3M8.500 8h3" stroke="#fff" />
        </svg>
      </button>
      <div className="ml-[5px] flex">
        {sheets.map((s) => (
          <button
            key={s}
            onClick={() => setActive(s)}
            className={`relative border-b-2 px-[7px] pt-px leading-[13px] ${s === active ? 'border-[#8b8b89] bg-white font-bold text-[#1d1d1d]' : 'border-transparent after:absolute after:right-0 after:top-1 after:h-2 after:w-px after:bg-[#cfccc9]'}`}
          >
            {s}
          </button>
        ))}
      </div>
    </div>
  );
}

function Sidebar() {
  return (
    <aside className="relative flex w-[39px] shrink-0 flex-col items-center gap-[13px] border-l border-[#cfccc9] pt-[5px]">
      <button aria-label="Sidebar settings" className="mb-[2px] flex h-4 items-center">
        <svg width="10" height="9" viewBox="0 0 10 9"><path d="M0 1h10M0 4.500h10M0 8h10" stroke="#2e3436" strokeWidth="1.400" /></svg>
      </button>
      {['properties', 'styles', 'gallery', 'navigator'].map((n) => (
        <button key={n} aria-label={n}><Icon name={n} /></button>
      ))}
      <button aria-label="functions" className="font-['Liberation_Serif',serif] text-[17px] italic leading-4 text-[#2f93d6]">fx</button>
      <div className="absolute left-0 top-[268px] h-[50px] w-1 bg-[#929292]" />
    </aside>
  );
}

function StatusBar() {
  const [zoom, setZoom] = useState(100);
  const box = 'flex items-center border-r border-[#e4e2e0]';
  return (
    <footer className="grid h-[18px] grid-cols-[167fr_212fr_245fr_158fr_46fr_30fr_20fr_20fr_173fr_97fr_32fr] border-t border-[#cfccc9] pt-px text-[9px] text-[#3f4446]">
      <div className={`${box} gap-[9px] pl-[6px]`}>
        <svg width="12" height="12" viewBox="0 0 12 12" fill="none">
          <path d="M.500.500h11v11h-9l-2-2zM3.500.500v4h5v-4M3.500 11.500v-4h5v4" stroke="#a3a3a1" />
        </svg>
        Sheet 3 of 4
      </div>
      <div className={`${box} pl-[7px]`}>Selected: 1 row, 16 columns</div>
      <div className={`${box} pl-[6px]`}>PageStyle_Dashboard</div>
      <div className={`${box} justify-center`}>English (USA)</div>
      <div className={box} />
      <div className={`${box} justify-center gap-[3px]`}>
        <svg width="12" height="7" viewBox="0 0 12 7" fill="none"><path d="M.500.500h11v6H.500z" stroke="#3a8ccc" /></svg>
        <svg width="5" height="11" viewBox="0 0 5 11" fill="none"><path d="M0 .500h5M0 10.500h5M2.500.500v10" stroke="#3a3a3a" /></svg>
      </div>
      <div className={box} />
      <div className={box} />
      <div className={`${box} justify-center`}>Average: ; Sum: 0</div>
      <div className={`${box} justify-center gap-1`}>
        <button aria-label="Zoom out" className="h-[2px] w-[7px] bg-[#2e3436]" />
        <input
          type="range"
          aria-label="Zoom"
          min={20}
          max={180}
          value={zoom}
          onChange={(e) => setZoom(Number(e.target.value))}
          className="h-2 w-[66px] appearance-none bg-[linear-gradient(#9a9a98,#9a9a98)] bg-[length:100%_1px] bg-center bg-no-repeat [&::-webkit-slider-thumb]:h-[7px] [&::-webkit-slider-thumb]:w-[3px] [&::-webkit-slider-thumb]:appearance-none [&::-webkit-slider-thumb]:border [&::-webkit-slider-thumb]:border-[#4a4a4a] [&::-webkit-slider-thumb]:bg-white"
        />
        <button aria-label="Zoom in">
          <svg width="7" height="7" viewBox="0 0 7 7"><path d="M0 3.500h7M3.500 0v7" stroke="#2e3436" strokeWidth="1.500" /></svg>
        </button>
      </div>
      <div className="flex items-center pl-[5px]">{zoom}%</div>
    </footer>
  );
}

export default function App() {
  return (
    <div className="flex h-screen flex-col overflow-hidden bg-[#f6f5f4] font-['Noto_Sans',sans-serif]">
      <MenuBar />
      <StandardBar />
      <FormatBar />
      <div className="flex min-h-0 flex-1">
        <main className="flex min-w-0 flex-1 flex-col">
          <FormulaBar />
          <div className="flex min-h-0 flex-1">
            <div className="relative min-w-0 flex-1 overflow-hidden bg-white">
              <SheetTable />
              <RiskChart />
              <StatusChart />
              <DateChart />
              <div className="absolute left-[22px] right-0 top-[69px] h-px bg-[#3c3c3e]" />
            </div>
            <div className="w-[9px] shrink-0 bg-[#cdcdcd] pl-px pt-[2px]">
              <div className="h-[46%] w-[6px] rounded-full bg-[#808080]" />
            </div>
          </div>
          <div className="flex h-[9px] items-center bg-[#cdcdcd] pl-[2px] pr-[11px]">
            <div className="h-[6px] w-[47%] rounded-full bg-[#7d7e7c]" />
            <div className="ml-auto h-[6px] w-px bg-[#5a5a5a]" />
          </div>
          <SheetTabs />
        </main>
        <Sidebar />
      </div>
      <StatusBar />
    </div>
  );
}
